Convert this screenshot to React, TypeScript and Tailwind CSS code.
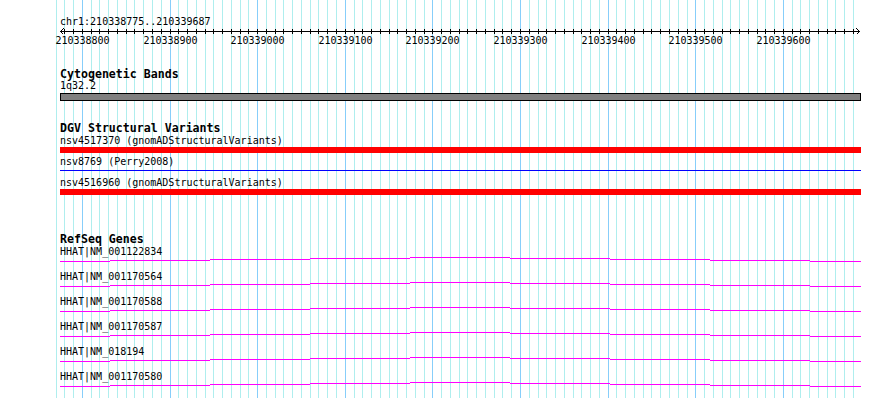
import React from "react";

const START = 210338775;
const END = 210339687;
const LEFT = 60;
const WIDTH = 800;

// genomic position -> page x
const px = (bp: number) => Math.round(LEFT + ((bp - START) * WIDTH) / (END - START + 1));

const gridBps: number[] = [];
for (let bp = 210338770; bp <= 210339680; bp += 10) gridBps.push(bp);

const majorBps = gridBps.filter((bp) => bp % 100 === 0 && bp >= START);

const transcripts = [
  "HHAT|NM_001122834",
  "HHAT|NM_001170564",
  "HHAT|NM_001170588",
  "HHAT|NM_001170587",
  "HHAT|NM_018194",
  "HHAT|NM_001170580",
];

// intron "hat" as the stepped line the image rasteriser drew
const hat: [number, number, number][] = [
  [60, 110, 4],
  [110, 210, 3],
  [210, 310, 2],
  [310, 410, 1],
  [410, 510, 0],
  [510, 610, 1],
  [610, 710, 2],
  [710, 810, 3],
  [810, 861, 4],
];

function Grid() {
  return (
    <svg className="absolute inset-0" width={890} height={398} shapeRendering="crispEdges">
      {gridBps.map((bp) => (
        <rect
          key={bp}
          x={px(bp)}
          y={0}
          width={1}
          height={398}
          fill={bp % 100 === 0 ? "#87cefa" : "#afeeee"}
        />
      ))}
    </svg>
  );
}

function Ruler() {
  return (
    <svg width={801} height={20} className="block overflow-visible text-[10px]" shapeRendering="crispEdges">
      <rect x={0} y={4} width={800} height={1} fill="#000" />
      {gridBps
        .filter((bp) => bp >= START)
        .map((bp) => (
          <rect key={bp} x={px(bp) - LEFT} y={2} width={1} height={5} fill="#000" />
        ))}
      <path d="M3.5 1.5 L0.5 4.5 L3.5 7.5" stroke="#000" fill="none" />
      <path d="M796.5 1.5 L799.5 4.5 L796.5 7.5" stroke="#000" fill="none" />
      {majorBps.map((bp) => (
        <text key={bp} x={px(bp) - LEFT + 0.5} y={17} textAnchor="middle" fill="#000">
          {bp}
        </text>
      ))}
    </svg>
  );
}

function TrackTitle({ children, className }: { children: React.ReactNode; className: string }) {
  return (
    <div className={"h-[11px] text-[11.6px] leading-[10px] font-bold whitespace-nowrap " + className}>
      {children}
    </div>
  );
}

export default function App() {
  return (
    <div className="relative w-[890px] h-[398px] overflow-hidden bg-white text-black font-['DejaVu_Sans_Mono',monospace]">
      <Grid />
      <div className="relative pl-[60px] text-[10px]">
        <div className="pt-[17px] h-[27px] leading-[10px] whitespace-nowrap">chr1:210338775..210339687</div>
        <Ruler />

        <TrackTitle className="mt-[22px]">Cytogenetic Bands</TrackTitle>
        <div className="h-[12px] leading-[12px]">1q32.2</div>
        <div className="mt-[1px] h-[8px] w-[801px] border border-black bg-[#808080]" />

        <TrackTitle className="mt-[22px]">DGV Structural Variants</TrackTitle>
        <div className="mt-[1px] h-[12px] leading-[12px] whitespace-nowrap">nsv4517370 (gnomADStructuralVariants)</div>
        <div className="h-[6px] w-[801px] bg-[#ff0000]" />
        <div className="mt-[3px] h-[12px] leading-[12px] whitespace-nowrap">nsv8769 (Perry2008)</div>
        <div className="mt-[2px] h-[1px] w-[801px] bg-[#0000ff]" />
        <div className="mt-[6px] h-[12px] leading-[12px] whitespace-nowrap">nsv4516960 (gnomADStructuralVariants)</div>
        <div className="h-[6px] w-[801px] bg-[#ff0000]" />

        <TrackTitle className="mt-[39px]">RefSeq Genes</TrackTitle>
        <div className="flex flex-col gap-[10px] mt-[2px]">
          {transcripts.map((name) => (
            <div key={name}>
              <div className="h-[10px] leading-[10px] whitespace-nowrap">{name}</div>
              <svg width={801} height={5} className="block" shapeRendering="crispEdges">
                {hat.map(([a, b, dy]) => (
                  <rect key={a} x={a - LEFT} y={dy} width={b - a} height={1} fill="#ff00ff" />
                ))}
              </svg>
            </div>
          ))}
        </div>
      </div>
    </div>
  );
}
